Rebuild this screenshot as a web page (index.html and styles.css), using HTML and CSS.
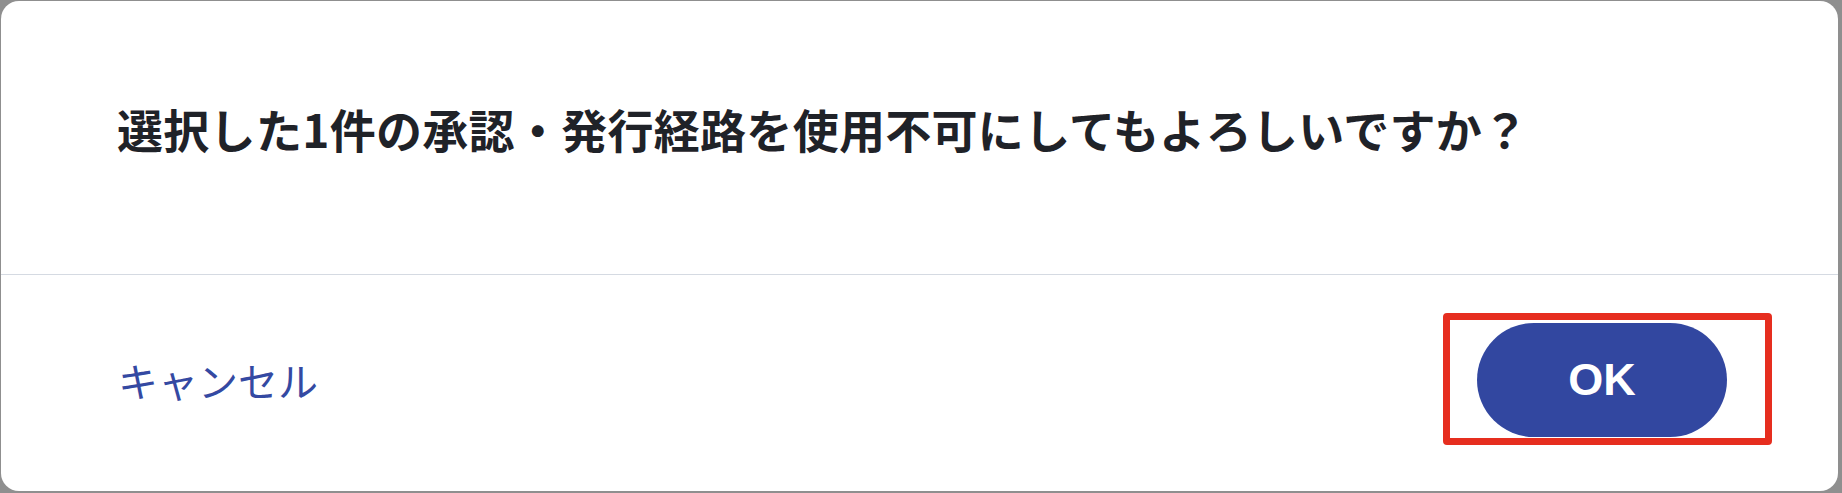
FILE: index.html
```html
<!DOCTYPE html>
<html lang="ja">
<head>
<meta charset="utf-8">
<title>確認</title>
<link rel="stylesheet" href="styles.css">
</head>
<body>
<div class="dialog">
  <div class="dialog-body">
    <p class="message">選択した1件の承認・発行経路を使用不可にしてもよろしいですか？</p>
  </div>
  <div class="dialog-footer">
    <button class="btn-cancel" type="button">キャンセル</button>
    <div class="ok-wrap">
      <button class="btn-ok" type="button">OK</button>
      <span class="highlight"></span>
    </div>
  </div>
</div>
</body>
</html>
```
FILE: styles.css
```css
html, body {
  margin: 0;
  height: 100%;
}
body {
  background: #8f8f8f;
  box-sizing: border-box;
  padding: 1px 4px 2px 1px;
  font-family: "Noto Sans CJK JP", "Noto Sans", sans-serif;
}
.dialog {
  background: #ffffff;
  border-radius: 18px;
  height: 490px;
  display: flex;
  flex-direction: column;
  overflow: hidden;
}
.dialog-body {
  height: 273px;
  box-sizing: border-box;
  padding: 104px 0 0 116px;
}
.message {
  margin: 0;
  font-size: 46px;
  line-height: 46px;
  font-weight: 700;
  color: #1f2228;
  letter-spacing: 0.3px;
  white-space: nowrap;
}
.dialog-footer {
  flex: 1;
  border-top: 1px solid #d5dae2;
  display: flex;
  align-items: center;
  justify-content: space-between;
  padding: 0 111px 6px 117px;
}
.btn-cancel {
  background: none;
  border: 0;
  padding: 0;
  font-family: "Noto Sans CJK JP", "Noto Sans", sans-serif;
  font-size: 40px;
  line-height: 48px;
  font-weight: 400;
  color: #3449a2;
  cursor: pointer;
}
.ok-wrap {
  position: relative;
}
.btn-ok {
  display: block;
  width: 250px;
  height: 114px;
  border: 0;
  border-radius: 57px;
  background: #3247a0;
  color: #ffffff;
  font-family: "Liberation Sans", Arial, sans-serif;
  font-size: 45px;
  font-weight: 700;
  cursor: pointer;
}
.highlight {
  position: absolute;
  left: -34px;
  top: -10px;
  width: 329px;
  height: 132px;
  box-sizing: border-box;
  border: 7px solid #e62e1f;
  border-radius: 4px;
  pointer-events: none;
}
```
